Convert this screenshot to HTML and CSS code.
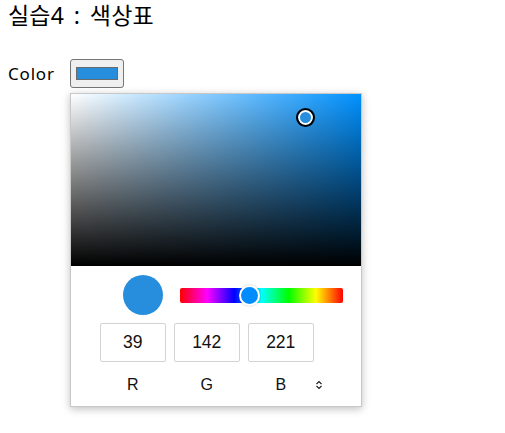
FILE: index.html
```html
<!DOCTYPE html>
<html lang="ko">
<head>
<meta charset="utf-8">
<title>실습4 : 색상표</title>
<link rel="stylesheet" href="styles.css">
</head>
<body>
<div class="page">
  <div class="title">실습4 : 색상표</div>
  <div class="field">
    <span class="label">Color</span>
    <div class="picker">
      <button class="color-btn" type="button"><span class="swatch"></span></button>
      <div class="popup">
        <div class="sv"><span class="sv-marker" style="left:225px; top:14px;"></span></div>
        <div class="controls">
          <div class="row1">
            <span class="preview"></span>
            <div class="hue"><span class="hue-thumb" style="left:59px;"></span></div>
          </div>
          <div class="inputs">
            <input class="num" type="text" value="39">
            <input class="num" type="text" value="142">
            <input class="num" type="text" value="221">
          </div>
          <div class="labels">
            <div class="label-group">
              <span class="chan">R</span>
              <span class="chan">G</span>
              <span class="chan">B</span>
            </div>
            <svg class="toggle" width="8" height="10" viewBox="0 0 8 10"><path d="M1.5 4 L4 1.5 L6.5 4 M1.5 6 L4 8.5 L6.5 6" fill="none" stroke="#222" stroke-width="1.2"/></svg>
          </div>
        </div>
      </div>
    </div>
  </div>
</div>
</body>
</html>
```
FILE: styles.css
```css
html, body {
  height: 100%;
}
body {
  margin: 0;
  font-family: "Noto Sans", "Noto Sans CJK KR", sans-serif;
  color: #000;
  background: #fff;
}
.page {
  min-height: 433px;
  box-sizing: border-box;
  padding: 0 8px;
}
.title {
  font-size: 23px;
  line-height: 31px;
  word-spacing: 3.5px;
  letter-spacing: 0.2px;
}
.field {
  margin-top: 28px;
  display: flex;
  align-items: center;
  gap: 15px;
}
.label {
  font-size: 17px;
  letter-spacing: 0.8px;
}
.picker {
  position: relative;
}
.color-btn {
  display: flex;
  align-items: center;
  justify-content: center;
  width: 54px;
  height: 29px;
  padding: 0;
  box-sizing: border-box;
  border: 1px solid #767676;
  border-radius: 3px;
  background: #efefef;
}
.swatch {
  display: block;
  width: 42px;
  height: 13px;
  box-sizing: border-box;
  border: 1px solid #6a6a6a;
  background: #278edd;
}
.popup {
  position: absolute;
  z-index: 10;
  top: 34px;
  left: 0;
  width: 292px;
  height: 314px;
  box-sizing: border-box;
  border: 1px solid #c8c8c8;
  background: #fff;
  box-shadow: 0 2px 8px rgba(0, 0, 0, 0.25);
}
.sv {
  position: relative;
  width: 290px;
  height: 172px;
  background:
    linear-gradient(to top, #000, rgba(0, 0, 0, 0)),
    linear-gradient(to right, #fff, rgb(0, 145, 255));
}
.sv-marker {
  position: absolute;
  width: 19px;
  height: 19px;
  box-sizing: border-box;
  border: 2.5px solid #000;
  border-radius: 50%;
  background: #278edd;
  box-shadow: inset 0 0 0 2px #fff;
}
.controls {
  height: 140px;
}
.row1 {
  display: flex;
  align-items: center;
  gap: 17px;
  padding-top: 9px;
  padding-left: 52px;
}
.preview {
  width: 40px;
  height: 40px;
  border-radius: 50%;
  background: #278edd;
}
.hue {
  position: relative;
  width: 163px;
  height: 15px;
  border-radius: 2px;
  background: linear-gradient(to right, #f00 0%, #f0f 16.67%, #00f 33.33%, #0ff 50%, #0f0 66.67%, #ff0 83.33%, #f00 100%);
}
.hue-thumb {
  position: absolute;
  top: -3px;
  width: 21px;
  height: 21px;
  box-sizing: border-box;
  border: 2px solid #fff;
  border-radius: 50%;
  background: rgb(0, 140, 255);
  box-shadow: 0 0 2px rgba(0, 0, 0, 0.25);
}
.inputs {
  display: flex;
  gap: 8px;
  margin-top: 8px;
  padding-left: 29px;
}
.num {
  width: 66px;
  height: 39px;
  box-sizing: border-box;
  margin: 0;
  padding: 0;
  border: 1px solid #d3d3d3;
  border-radius: 2px;
  font-family: "Liberation Sans", Arial, sans-serif;
  font-size: 17.5px;
  color: #111;
  text-align: center;
  background: #fff;
}
.labels {
  display: flex;
  align-items: center;
  margin-top: 12px;
  padding-left: 29px;
  height: 22px;
}
.label-group {
  display: flex;
  gap: 8px;
}
.chan {
  width: 66px;
  text-align: center;
  font-family: "Liberation Sans", Arial, sans-serif;
  font-size: 16px;
  line-height: 22px;
  color: #111;
}
.toggle {
  margin-left: 1px;
}
```
